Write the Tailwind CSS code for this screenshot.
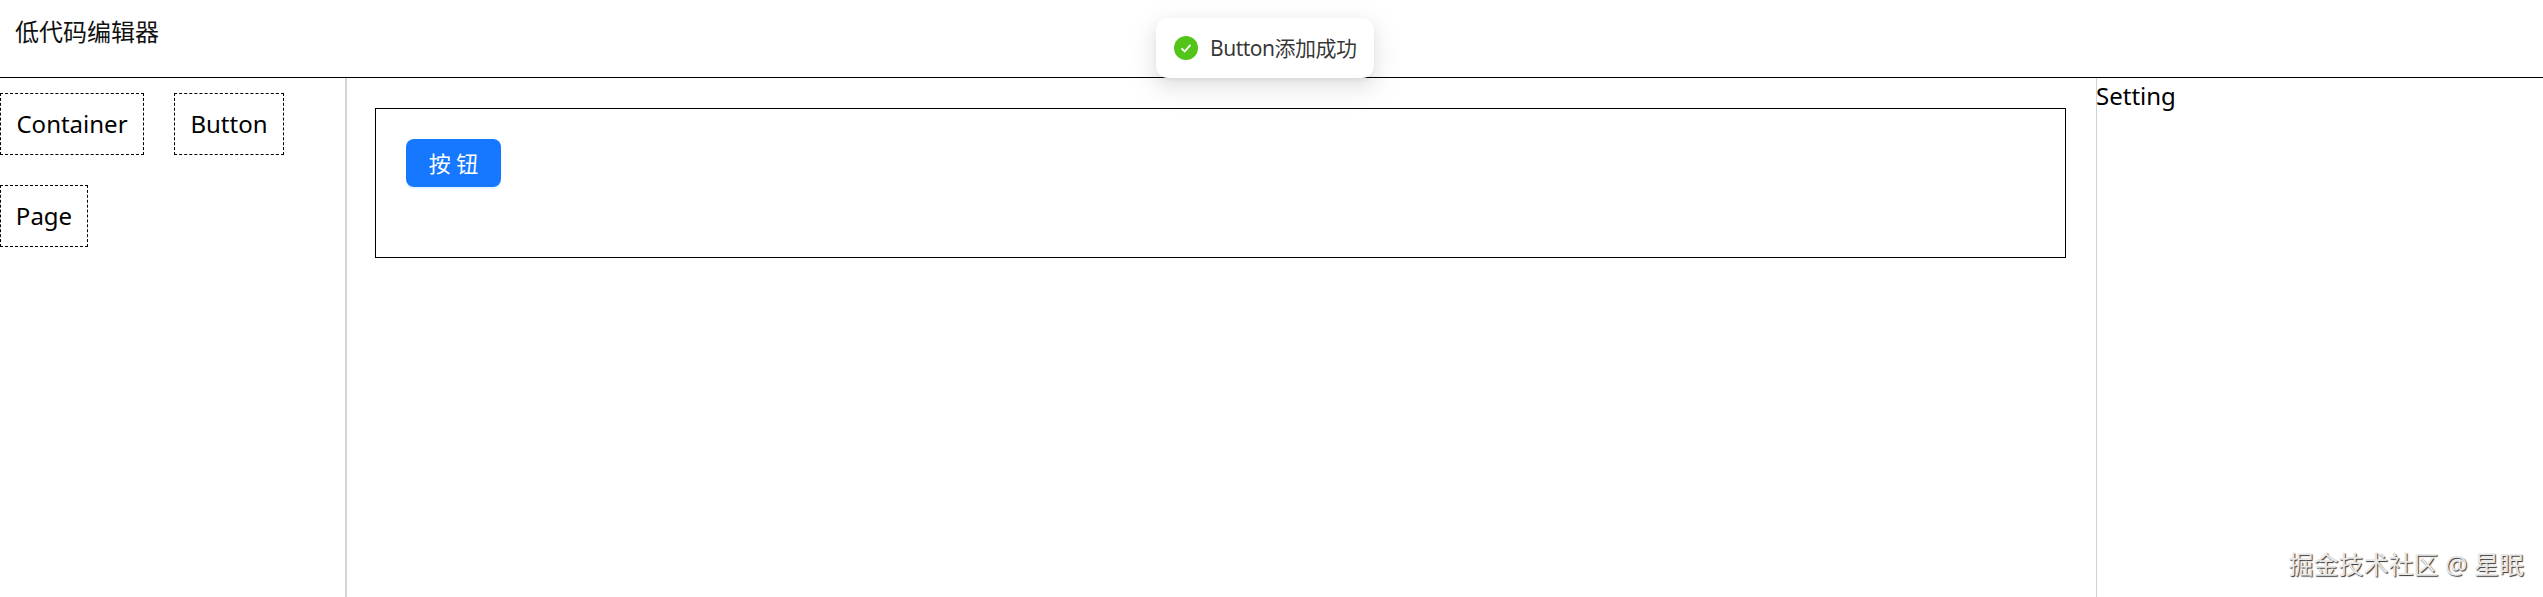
<!DOCTYPE html>
<html lang="zh-CN">
  <head>
    <meta charset="UTF-8" />
    <title>低代码编辑器</title>
    <script src="https://cdn.jsdelivr.net/npm/@tailwindcss/browser@4"></script>
  </head>
  <body class="relative h-screen overflow-hidden bg-white text-black font-['Noto_Sans','Noto_Sans_CJK_SC',sans-serif]">
    <!-- header -->
    <header class="h-[78px] border-b border-black flex items-center pl-[15px] pb-[13px]">
      <h1 class="text-[24px] leading-none font-normal text-[#111]">低代码编辑器</h1>
    </header>

    <div class="flex h-[519px]">
      <!-- component list -->
      <aside class="w-[347px] shrink-0 border-r-[2px] border-[#d3d3d3] pt-[15px]">
        <div class="flex flex-wrap gap-x-[30px] gap-y-[30px]">
          <div class="h-[62px] w-[144px] border border-dashed border-black flex items-center justify-center text-[24px]">Container</div>
          <div class="h-[62px] w-[110px] border border-dashed border-black flex items-center justify-center text-[24px]">Button</div>
          <div class="h-[62px] w-[88px] border border-dashed border-black flex items-center justify-center text-[24px]">Page</div>
        </div>
      </aside>

      <!-- canvas -->
      <main class="flex-1 pt-[30px] pl-[28px] pr-[30px]">
        <div class="h-[150px] border border-black p-[30px]">
          <button class="block w-[95px] h-[48px] rounded-[8px] bg-[#1677ff] text-white text-[22px] leading-none shadow-[0_2px_0_rgba(5,145,255,0.1)]">按 钮</button>
        </div>
      </main>

      <!-- settings -->
      <aside class="w-[447px] shrink-0 border-l border-[#d3d3d3] text-[24px] leading-[36px]"><p class="-ml-px">Setting</p></aside>
    </div>

    <!-- toast -->
    <div class="absolute left-[1156px] top-[18px] w-[218px] h-[60px] rounded-[12px] bg-white flex items-center pl-[18px] gap-[12px] shadow-[0_9px_28px_8px_rgba(0,0,0,0.05),0_6px_16px_0_rgba(0,0,0,0.08),0_3px_6px_-4px_rgba(0,0,0,0.12)]">
      <svg class="w-[24px] h-[24px] shrink-0" viewBox="0 0 24 24">
        <circle cx="12" cy="12" r="12" fill="#52c41a" />
        <path d="M7.5 12.3l3.2 3.2 5.8-6.6" fill="none" stroke="#fff" stroke-width="1.8" />
      </svg>
      <span class="text-[21px] leading-none whitespace-nowrap tracking-[-0.5px] text-black/80">Button添加成功</span>
    </div>

    <!-- watermark -->
    <div class="absolute right-[19px] top-[548px] text-[25px] leading-[32px] whitespace-nowrap text-[#e8e8e8] [text-shadow:1px_1px_1px_#333]">掘金技术社区 @ 星眠</div>
  </body>
</html>
